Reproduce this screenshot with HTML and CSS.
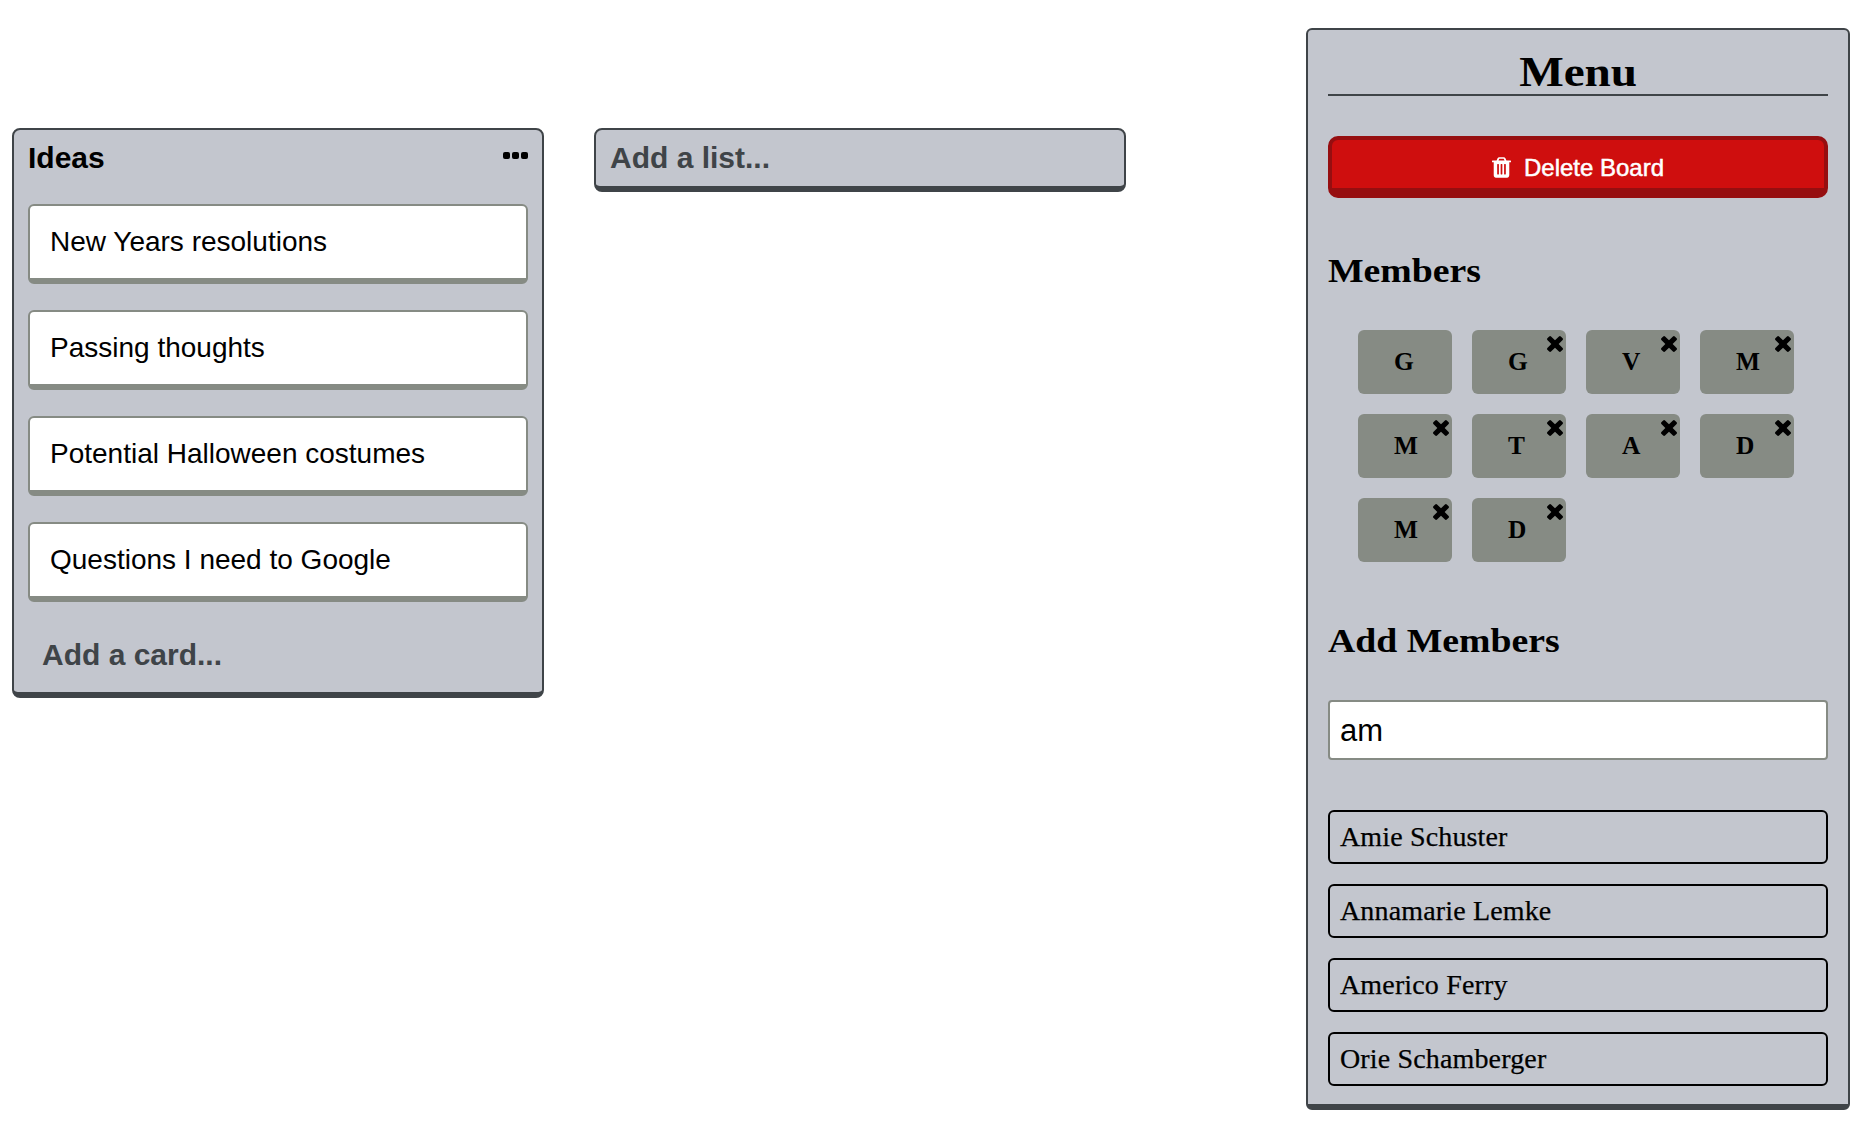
FILE: index.html
```html
<!DOCTYPE html>
<html lang="en">
<head>
<meta charset="utf-8">
<title>Board</title>
<link rel="stylesheet" href="styles.css">
</head>
<body>
<svg class="symbols" aria-hidden="true">
  <symbol id="times" viewBox="302 366 1188 1188"><path d="M1490 1322q0 40-28 68l-136 136q-28 28-68 28t-68-28l-294-294-294 294q-28 28-68 28t-68-28l-136-136q-28-28-28-68t28-68l294-294-294-294q-28-28-28-68t28-68l136-136q28-28 68-28t68 28l294 294 294-294q28-28 68-28t68 28l136 136q28 28 28 68t-28 68l-294 294 294 294q28 28 28 68z"/></symbol>
</svg>
<div class="page">
  <main class="lists">
    <section class="list">
      <header class="list-header">
        <h3 class="list-title">Ideas</h3>
        <svg class="dots" viewBox="0 0 25 7"><rect width="7" height="7" rx="2"/><rect x="9" width="7" height="7" rx="2"/><rect x="18" width="7" height="7" rx="2"/></svg>
      </header>
      <div class="cards">
        <div class="card">New Years resolutions</div>
        <div class="card">Passing thoughts</div>
        <div class="card">Potential Halloween costumes</div>
        <div class="card">Questions I need to Google</div>
      </div>
      <div class="add-card">Add a card...</div>
    </section>
    <section class="list new-list">Add a list...</section>
  </main>
  <aside class="menu">
    <h1 class="menu-title"><span class="wide">Menu</span></h1>
    <button class="delete" type="button">
      <svg class="trash" viewBox="0 128 1408 1536"><path d="M512 1376v-704q0-14-9-23t-23-9h-64q-14 0-23 9t-9 23v704q0 14 9 23t23 9h64q14 0 23-9t9-23zm256 0v-704q0-14-9-23t-23-9h-64q-14 0-23 9t-9 23v704q0 14 9 23t23 9h64q14 0 23-9t9-23zm256 0v-704q0-14-9-23t-23-9h-64q-14 0-23 9t-9 23v704q0 14 9 23t23 9h64q14 0 23-9t9-23zm-544-992h448l-48-117q-7-9-17-11h-317q-10 2-17 11zm928 32v64q0 14-9 23t-23 9h-96v948q0 83-47 143.500t-113 60.500h-832q-66 0-113-58.500t-47-141.500v-952h-96q-14 0-23-9t-9-23v-64q0-14 9-23t23-9h309l70-167q15-37 54-63t79-26h320q40 0 79 26t54 63l70 167h309q14 0 23 9t9 23z"/></svg>
      <span>Delete Board</span>
    </button>
    <h2 class="section-title"><span class="wide">Members</span></h2>
    <div class="members">
      <div class="member">G</div>
      <div class="member">G<svg class="remove"><use href="#times"/></svg></div>
      <div class="member">V<svg class="remove"><use href="#times"/></svg></div>
      <div class="member">M<svg class="remove"><use href="#times"/></svg></div>
      <div class="member">M<svg class="remove"><use href="#times"/></svg></div>
      <div class="member">T<svg class="remove"><use href="#times"/></svg></div>
      <div class="member">A<svg class="remove"><use href="#times"/></svg></div>
      <div class="member">D<svg class="remove"><use href="#times"/></svg></div>
      <div class="member">M<svg class="remove"><use href="#times"/></svg></div>
      <div class="member">D<svg class="remove"><use href="#times"/></svg></div>
    </div>
    <h2 class="section-title"><span class="wide">Add Members</span></h2>
    <input class="search" type="text" value="am">
    <ul class="results">
      <li class="result">Amie Schuster</li>
      <li class="result">Annamarie Lemke</li>
      <li class="result">Americo Ferry</li>
      <li class="result">Orie Schamberger</li>
    </ul>
  </aside>
</div>
</body>
</html>
```
FILE: styles.css
```css
* { box-sizing: border-box; }

body {
  margin: 0;
  background: #fff;
  color: #000;
  font-family: "Liberation Sans", Arial, sans-serif;
}

h1, h2, h3, ul { margin: 0; padding: 0; }

.symbols { display: none; }

.page {
  display: flex;
  justify-content: space-between;
  align-items: flex-start;
  padding: 28px 26px 28px 12px;
}

.lists {
  display: flex;
  align-items: flex-start;
  gap: 50px;
  padding-top: 100px;
}

.list {
  width: 532px;
  height: 570px;
  padding: 10px 14px;
  border: 2px solid #3f4448;
  border-bottom-width: 6px;
  border-radius: 8px;
  background: #c3c6ce;
}

.list-header {
  display: flex;
  justify-content: space-between;
  height: 64px;
}

.list-title {
  font-size: 30px;
  line-height: 35px;
}

.dots { width: 25px; height: 7px; margin-top: 12px; }

.cards { display: grid; gap: 26px; }

.card {
  height: 80px;
  padding: 0 20px;
  border: 2px solid #868b84;
  border-bottom-width: 6px;
  border-radius: 6px;
  background: #fff;
  font-size: 28px;
  line-height: 72px;
}

.add-card {
  margin-top: 36px;
  padding-left: 14px;
  color: #3f4448;
  font-size: 30px;
  font-weight: bold;
  line-height: 34px;
}

.new-list {
  height: 64px;
  color: #3f4448;
  font-size: 30px;
  font-weight: bold;
  line-height: 35px;
}

.menu {
  width: 544px;
  height: 1082px;
  padding: 20px;
  border: 2px solid #3f4448;
  border-bottom-width: 6px;
  border-radius: 6px;
  background: #c3c6ce;
  font-family: "Liberation Serif", Georgia, serif;
}

.wide {
  display: inline-block;
  transform: scaleX(1.11);
  transform-origin: left;
}

.menu-title {
  height: 46px;
  border-bottom: 2px solid #3f4448;
  font-size: 42.5px;
  line-height: 44px;
  text-align: center;
}

.menu-title .wide { transform-origin: center; }

.delete {
  display: flex;
  align-items: center;
  justify-content: center;
  gap: 13px;
  width: 500px;
  height: 62px;
  margin-top: 40px;
  padding: 0;
  border: 4px solid #960e10;
  border-bottom-width: 10px;
  border-radius: 10px;
  background: #cf0e0e;
  color: #fff;
  font: 24px "Liberation Sans", Arial, sans-serif;
}

.delete span { padding-top: 7px; -webkit-text-stroke: 0.5px #fff; }

.trash { width: 19px; height: 21px; margin-top: 7px; fill: #fff; }

.section-title {
  height: 40px;
  margin-top: 52px;
  font-size: 34px;
  line-height: 42px;
}

.members {
  display: grid;
  grid-template-columns: repeat(4, 94px);
  gap: 20px;
  margin-top: 40px;
  padding-left: 30px;
}

.member {
  position: relative;
  height: 64px;
  padding-left: 36px;
  border-radius: 6px;
  background: #868b84;
  font-size: 25.4px;
  font-weight: bold;
  line-height: 62px;
}

.remove {
  position: absolute;
  top: 6px;
  right: 3px;
  width: 16px;
  height: 16px;
}

.members + .section-title { margin-top: 58px; }

.search {
  display: block;
  width: 500px;
  height: 60px;
  margin-top: 40px;
  padding: 2px 10px 0;
  border: 2px solid #868b84;
  border-radius: 4px;
  outline: none;
  background: #fff;
  color: #000;
  font: 31px "Liberation Sans", Arial, sans-serif;
}

.results {
  display: grid;
  gap: 20px;
  margin-top: 50px;
  list-style: none;
}

.result {
  height: 54px;
  padding-left: 10px;
  border: 2px solid #000;
  border-radius: 6px;
  font-size: 28px;
  letter-spacing: 0.15px;
  line-height: 49px;
  -webkit-text-stroke: 0.25px #000;
}
```
